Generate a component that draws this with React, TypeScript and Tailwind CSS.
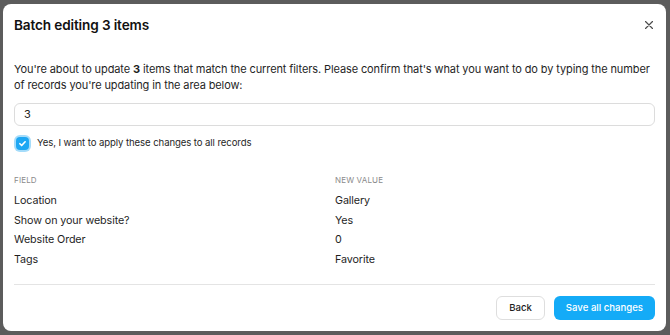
import React from 'react';

const changes = [
  { field: 'Location', value: 'Gallery' },
  { field: 'Show on your website?', value: 'Yes' },
  { field: 'Website Order', value: '0' },
  { field: 'Tags', value: 'Favorite' },
];

function CloseIcon() {
  return (
    <svg width="8" height="8" viewBox="0 0 8 8" fill="none" stroke="#4b4b4b" strokeWidth="1.2" strokeLinecap="round">
      <path d="M0.5 0.5l7 7M7.5 0.5l-7 7" />
    </svg>
  );
}

function CheckedBox() {
  return (
    <span className="flex h-[13px] w-[13px] shrink-0 items-center justify-center rounded-[4px] bg-[#1ea7f3] ring-2 ring-[#1ea7f3]/40">
      <svg width="9" height="9" viewBox="0 0 12 12" fill="none" stroke="white" strokeWidth="2.2" strokeLinecap="round" strokeLinejoin="round">
        <path d="M2.5 6.3l2.4 2.4 4.6-5" />
      </svg>
    </span>
  );
}

export default function App() {
  return (
    <div
      className="h-[335px] w-[670px] overflow-hidden bg-[#5c5c5c] pl-[3px] pt-[4px]"
      style={{ fontFamily: 'Inter, "Noto Sans", sans-serif' }}
    >
      <div className="flex h-[327px] w-[663px] flex-col rounded-[8px] bg-white px-[11px] text-[#1f1f1f]">
        <div className="flex items-center justify-between pt-[9px]">
          <h2 className="text-[13.6px] font-semibold leading-[24px] tracking-[-0.01em] text-[#111]">Batch editing 3 items</h2>
          <span className="mr-[2px] flex items-center">
            <CloseIcon />
          </span>
        </div>

        <p className="mt-[24px] text-[11px] leading-[16px] tracking-[-0.01em]">
          You're about to update <strong className="font-bold">3</strong> items that match the current filters. Please confirm that's what you want to do by typing the number of records you're updating in the area below:
        </p>

        <div className="mt-[10px] flex h-[23px] items-center rounded-[6px] border border-[#dcdcdc] px-[9px] text-[11px]">
          3
        </div>

        <label className="mt-[10px] flex items-center gap-[8px] pl-[2px] text-[9.6px] leading-[14px] tracking-[-0.01em]">
          <CheckedBox />
          <span>Yes, I want to apply these changes to all records</span>
        </label>

        <div className="mt-[23px] grid grid-cols-[321px_1fr] text-[10.75px] tracking-[-0.01em]">
          <div className="text-[8px] uppercase leading-[14px] tracking-[0.02em] text-[#8a8a8a]">Field</div>
          <div className="text-[8px] uppercase leading-[14px] tracking-[0.02em] text-[#8a8a8a]">New value</div>
          <div className="col-span-2 h-[4px]" />
          {changes.map((c) => (
            <React.Fragment key={c.field}>
              <div className="leading-[19.7px]">{c.field}</div>
              <div className="leading-[19.7px]">{c.value}</div>
            </React.Fragment>
          ))}
        </div>

        <div className="mt-[14px] h-px bg-[#e4e4e4]" />

        <div className="mt-[11px] flex justify-end gap-[9px]">
          <button className="h-[24px] rounded-[6px] border border-[#dedede] bg-white px-[12px] text-[9.6px] font-medium text-[#1c1c1c]">
            Back
          </button>
          <button className="h-[24px] rounded-[6px] bg-[#14abf7] px-[12px] text-[9.6px] font-medium text-white">
            Save all changes
          </button>
        </div>
      </div>
    </div>
  );
}
